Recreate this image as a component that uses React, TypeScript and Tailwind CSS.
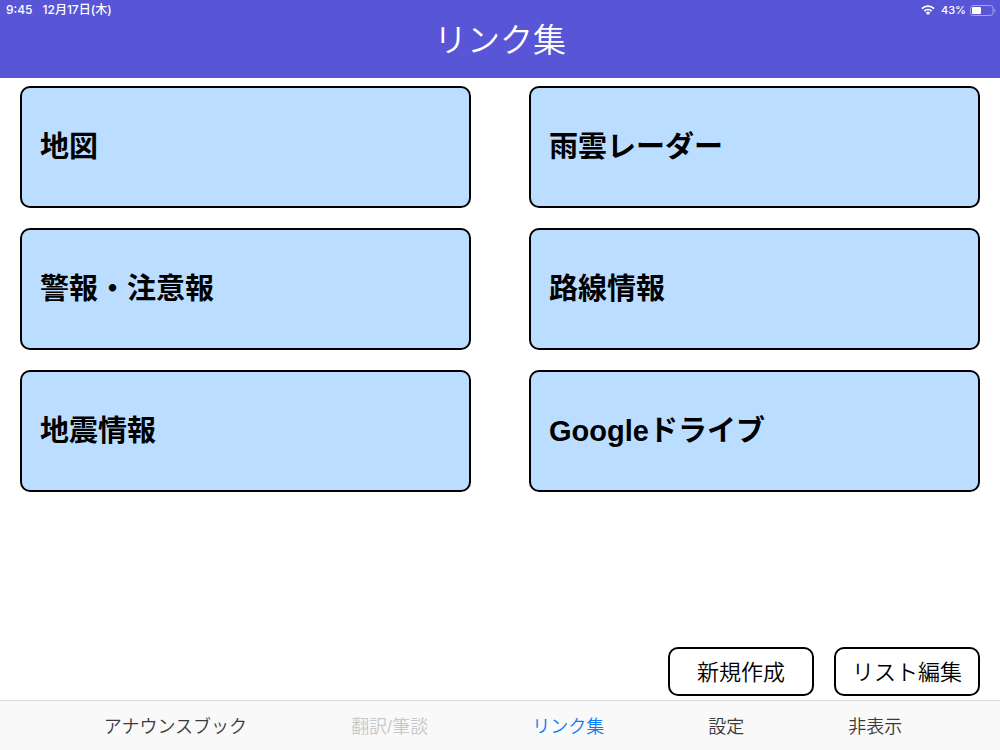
const links = ['地図', '雨雲レーダー', '警報・注意報', '路線情報', '地震情報', 'Googleドライブ'];

const actions = ['新規作成', 'リスト編集'];

const tabs = [
  { label: 'アナウンスブック', color: 'text-[#3a3a3a]' },
  { label: '翻訳/筆談', color: 'text-[#c8c8c8]' },
  { label: 'リンク集', color: 'text-[#0a7cf5]' },
  { label: '設定', color: 'text-[#3a3a3a]' },
  { label: '非表示', color: 'text-[#3a3a3a]' },
];

function WifiIcon() {
  return (
    <svg className="h-[10px] w-[14px]" viewBox="0 0 14 10" fill="currentColor" aria-hidden="true">
      <path d="M7 10 4.7 7.7a3.25 3.25 0 0 1 4.6 0Z" />
      <g fill="none" stroke="currentColor" strokeWidth="1.9">
        <path d="M3.3 6.1a5.3 5.3 0 0 1 7.4 0" />
        <path d="M.9 3.6a8.7 8.7 0 0 1 12.2 0" />
      </g>
    </svg>
  );
}

function BatteryIcon() {
  return (
    <svg className="h-[11px] w-[26px]" viewBox="0 0 26 11" aria-hidden="true">
      <rect x=".5" y=".5" width="22.5" height="10" rx="2.7" fill="none" stroke="#a5a4ea" />
      <rect x="2" y="2" width="9" height="7" rx="1" fill="#fff" />
      <path d="M24.2 3.7c1.5.5 1.5 3.1 0 3.6Z" fill="#a5a4ea" />
    </svg>
  );
}

export default function App() {
  return (
    <div className="flex min-h-screen flex-col bg-white font-['Liberation_Sans','Noto_Sans_CJK_JP',sans-serif] text-black">
      <header className="bg-[#5856d6] pb-4 text-white">
        <div className="flex h-5 items-center justify-between pr-1 pl-1.5 font-['Inter','Noto_Sans_CJK_JP',sans-serif] font-medium">
          <div className="flex gap-2.5 text-xs">
            <span>9:45</span>
            <span>12月17日(木)</span>
          </div>
          <div className="flex items-center gap-1 text-[11px]">
            <WifiIcon />
            <span className="pl-0.5">43%</span>
            <BatteryIcon />
          </div>
        </div>
        <h1 className="text-center text-[33px] leading-[42px] font-[350]">リンク集</h1>
      </header>

      <main className="flex flex-1 flex-col justify-between px-5 pt-2 pb-1">
        <div className="grid grid-cols-2 gap-x-[58px] gap-y-5">
          {links.map((label) => (
            <button
              key={label}
              type="button"
              className="h-[122px] rounded-[10px] border-2 border-black bg-[#bbddff] px-[18px] pt-0.5 text-left text-[29px] font-bold"
            >
              {label}
            </button>
          ))}
        </div>
        <div className="flex justify-end gap-5">
          {actions.map((label) => (
            <button
              key={label}
              type="button"
              className="h-[49px] w-[146px] rounded-[10px] border-2 border-black pt-0.5 text-[22px] font-[350]"
            >
              {label}
            </button>
          ))}
        </div>
      </main>

      <nav className="flex h-[50px] items-center justify-center gap-[104px] border-t border-[#d9d9d9] bg-[#f9f9f9] pt-0.5 pl-1.5 text-lg font-[350]">
        {tabs.map(({ label, color }) => (
          <a key={label} href="#" className={color}>
            {label}
          </a>
        ))}
      </nav>
    </div>
  );
}
